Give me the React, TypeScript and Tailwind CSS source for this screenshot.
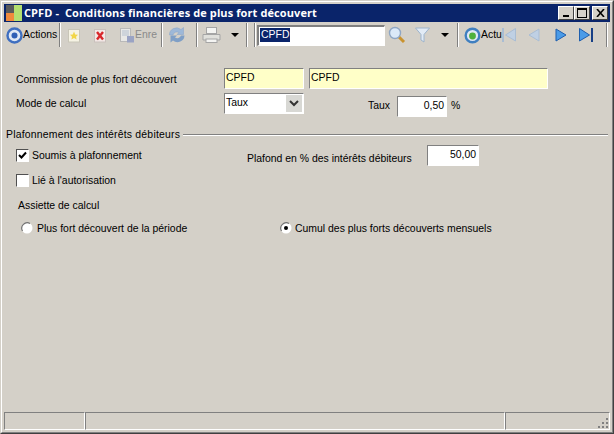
const FONT = 'font-["Liberation_Sans",sans-serif]';

// ─── small win2k controls ────────────────────────────────────────────────────

function Sep({ className = '' }: { className?: string }) {
  return <div className={`h-[24px] w-[2px] shrink-0 border-l border-r border-l-[#808080] border-r-white ${className}`} />;
}

function Caret({ className = '' }: { className?: string }) {
  return <div className={`h-0 w-0 shrink-0 border-x-[4px] border-t-[4px] border-x-transparent border-t-black ${className}`} />;
}

function Sunken({ className = '', children }: { className?: string; children?: React.ReactNode }) {
  return (
    <div className={`shrink-0 border-t border-l border-t-[#808080] border-l-[#808080] border-r border-b border-r-white border-b-white text-[10.45px] leading-[16px] text-black ${className}`}>
      {children}
    </div>
  );
}

function Check({ checked, className = '' }: { checked?: boolean; className?: string }) {
  return (
    <div className={`flex h-[13px] w-[13px] shrink-0 items-center justify-center border-t border-l border-t-[#505050] border-l-[#505050] border-r border-b border-r-white border-b-white bg-white ${className}`}>
      {checked && (
        <svg width="9" height="9" viewBox="0 0 9 9">
          <path d="M1 4 L3.5 6.5 L8 1.5" fill="none" stroke="#000" strokeWidth="2" />
        </svg>
      )}
    </div>
  );
}

function Radio({ checked, className = '' }: { checked?: boolean; className?: string }) {
  return (
    <svg width="12" height="12" viewBox="0 0 12 12" className={`shrink-0 ${className}`}>
      <circle cx="6" cy="6" r="5.5" fill="#fff" />
      <path d="M1.5 9 A5.5 5.5 0 0 1 9 1.5" fill="none" stroke="#707070" strokeWidth="1.2" />
      {checked && <circle cx="6" cy="6" r="2" fill="#000" />}
    </svg>
  );
}

function NavArrow({ dir, bar, on, className = '' }: { dir: 'l' | 'r'; bar?: boolean; on?: boolean; className?: string }) {
  const fill = on ? '#4a9be8' : '#bfd0e4';
  const line = on ? '#1f5fae' : '#a9bdd4';
  return (
    <svg width="16" height="16" viewBox="0 0 16 16" className={`shrink-0 ${className}`}>
      {dir === 'l' ? (
        <path d={bar ? 'M14.5 1.5 V14 L4.5 8 Z' : 'M13 2 V14 L3 8 Z'} fill={fill} stroke={line} />
      ) : (
        <path d={bar ? 'M1.5 1.5 V14 L11.5 8 Z' : 'M3 2 V14 L13 8 Z'} fill={fill} stroke={line} />
      )}
      {bar && <rect x={dir === 'l' ? 1 : 13} y="1" width="2" height="14" fill={on ? '#173f86' : '#a9bdd4'} />}
    </svg>
  );
}

function TitleButton({ children, className = '' }: { children: React.ReactNode; className?: string }) {
  return (
    <div className={`flex h-[14px] w-[16px] items-center justify-center border-t border-l border-t-white border-l-white border-r border-b border-r-[#404040] border-b-[#404040] bg-[#d4d0c8] ${className}`}>
      {children}
    </div>
  );
}

// ─── component ───────────────────────────────────────────────────────────────

export default function App() {
  return (
    <div className="h-[434px] w-[614px] overflow-hidden border border-t-[#d4d0c8] border-l-[#d4d0c8] border-r-[#404040] border-b-[#404040]">
      <div className="h-full border border-t-white border-l-white border-r-[#808080] border-b-[#808080]">
        <div className={`flex h-full flex-col border-[2px] border-[#d4d0c8] bg-[#d4d0c8] text-black ${FONT}`}>
          {/* Title bar */}
          <div className="flex h-[18px] shrink-0 items-center bg-[#0a246a] pl-[2px]">
            <div className="grid h-[16px] w-[16px] shrink-0 grid-cols-2 grid-rows-2">
              <div className="bg-[#5a5a5a]" />
              <div className="row-span-2 bg-[#b4e070]" />
              <div className="bg-[#f08a3c]" />
            </div>
            <span className={`ml-[2px] flex-1 whitespace-pre font-["Open_Sans",sans-serif] text-[11px] font-bold leading-[18px] tracking-[0.1px] text-white`}>CPFD -  Conditions financières de plus fort découvert</span>
            <TitleButton>
              <div className="mt-[6px] h-[2px] w-[6px] bg-black" />
            </TitleButton>
            <TitleButton>
              <div className="h-[10px] w-[10px] border border-t-2 border-black" />
            </TitleButton>
            <TitleButton className="ml-[2px] mr-[2px]">
              <svg width="9" height="8" viewBox="0 0 9 8">
                <path d="M1 0 L8 8 M8 0 L1 8" stroke="#000" strokeWidth="1.6" />
              </svg>
            </TitleButton>
          </div>

          {/* Toolbar */}
          <div className="flex h-[26px] shrink-0 items-center text-[10.45px]">
            <svg width="17" height="17" viewBox="0 0 17 17" className="ml-[2px] shrink-0">
              <circle cx="8.5" cy="8.5" r="7" fill="#dfe8f4" stroke="#3f6fc0" strokeWidth="2.4" />
              <circle cx="8.5" cy="8.5" r="3" fill="#2f5fb5" />
            </svg>
            <div className="w-[33px] shrink-0 whitespace-nowrap leading-[14px]">Actions</div>
            <Sep className="ml-[3px]" />
            <svg width="14" height="15" viewBox="0 0 14 15" className="ml-[6px] shrink-0">
              <rect x="1.5" y="1.5" width="11" height="12.5" fill="#f6f3e4" stroke="#c9c6b8" />
              <path d="M7 3.5 L8.2 6.5 L11 6.8 L9 8.8 L9.6 11.5 L7 10.1 L4.4 11.5 L5 8.8 L3 6.8 L5.8 6.5 Z" fill="#f2d648" />
            </svg>
            <svg width="14" height="15" viewBox="0 0 14 15" className="ml-[12px] shrink-0">
              <rect x="1.5" y="1.5" width="11" height="12.5" fill="#f3e8e6" stroke="#c9c0bc" />
              <path d="M4 4 L10 11.5 M10 4 L4 11.5" stroke="#d8262a" strokeWidth="2.4" />
            </svg>
            <svg width="15" height="16" viewBox="0 0 15 16" className="ml-[13px] shrink-0">
              <rect x="0.5" y="1.5" width="10" height="13" fill="#e8e8e6" stroke="#b9b9b9" />
              <path d="M2 4 H9 M2 6 H9 M2 8 H9" stroke="#b4c0d0" />
              <rect x="7" y="9" width="7" height="6.5" fill="#9aa3c4" />
            </svg>
            <div className="w-[22px] shrink-0 whitespace-nowrap leading-[14px] text-[#8a8a8a]">Enre</div>
            <Sep className="ml-[4px]" />
            <svg width="18" height="18" viewBox="0 0 18 18" className="ml-[5px] shrink-0">
              <path d="M1.5 9 A7 7 0 0 1 13 3.5 L15.5 1.5 V8.5 H9 L11 6.5 A4 4 0 0 0 5 9 Z" fill="#9db8d8" stroke="#86a3c8" strokeWidth="0.5" />
              <path d="M16.5 9.5 A7 7 0 0 1 5 14.5 L2.5 16.5 V9.5 H9 L7 11.5 A4 4 0 0 0 13 9.5 Z" fill="#7f9fc6" />
            </svg>
            <Sep className="ml-[10px]" />
            <svg width="19" height="18" viewBox="0 0 19 18" className="ml-[4px] shrink-0">
              <rect x="4.5" y="1.5" width="10" height="6" fill="#f4f4f2" stroke="#a5a5a5" />
              <path d="M1 8.5 H18 V14 H1 Z" fill="#e0e0dc" stroke="#a5a5a5" />
              <rect x="4" y="13" width="11" height="3.5" fill="#f4f4f2" stroke="#a5a5a5" />
            </svg>
            <Caret className="ml-[10px]" />
            <Sep className="ml-[7px]" />
            <Sep className="ml-[6px]" />
            <Sunken className="ml-[1px] h-[21px] w-[128px] border-t-2 border-l-2 border-t-[#555] border-l-[#555] bg-white pl-[1px] pt-[1px]">
              <span className="block w-fit bg-[#0a246a] px-[1px] leading-[14px] text-white">CPFD</span>
            </Sunken>
            <svg width="18" height="18" viewBox="0 0 18 18" className="ml-[3px] shrink-0">
              <path d="M10 10 L16 16" stroke="#c9932f" strokeWidth="3" />
              <circle cx="7" cy="7" r="5.5" fill="#dbe9f8" stroke="#8ea6c4" strokeWidth="1.4" />
            </svg>
            <svg width="15" height="16" viewBox="0 0 15 16" className="ml-[9px] shrink-0">
              <path d="M0.5 1 H14.5 L9 7.5 V15 L6 13 V7.5 Z" fill="#e2ebf5" stroke="#9db4cd" />
            </svg>
            <Caret className="ml-[11px]" />
            <Sep className="ml-[8px]" />
            <svg width="17" height="17" viewBox="0 0 17 17" className="ml-[5px] shrink-0">
              <circle cx="8.5" cy="8.5" r="6.8" fill="#dfe8f4" stroke="#3f7fc0" strokeWidth="2.4" />
              <circle cx="8.5" cy="9" r="3.4" fill="#4fb13c" />
            </svg>
            <div className="w-[20px] shrink-0 whitespace-nowrap leading-[14px]">Actu</div>
            <NavArrow dir="l" bar />
            <NavArrow dir="l" className="ml-[9px]" />
            <NavArrow dir="r" on className="ml-[11px]" />
            <NavArrow dir="r" bar on className="ml-[9px]" />
            <Sep className="ml-[12px]" />
          </div>

          {/* Form */}
          <div className="flex flex-1 flex-col pl-[2px] pr-[2px] text-[10.45px] leading-[16px]">
            <div className="mt-[20px] flex items-center">
              <span className="ml-[10px] mt-[2px] w-[208px] shrink-0">Commission de plus fort découvert</span>
              <Sunken className="h-[21px] w-[80px] bg-[#ffffc8] pl-[1px] pt-[1px]">CPFD</Sunken>
              <Sunken className="ml-[5px] h-[21px] w-[239px] bg-[#ffffc8] pl-[1px] pt-[1px]">CPFD</Sunken>
            </div>
            <div className="mt-[4px] flex items-start">
              <span className="ml-[10px] mt-[3px] w-[208px] shrink-0">Mode de calcul</span>
              <Sunken className="flex h-[21px] w-[80px] bg-white pl-[1px] pt-[1px]">
                <span className="flex-1">Taux</span>
                <div className="mr-[1px] flex h-[17px] w-[16px] items-center justify-center bg-[#d8d8d4]">
                  <svg width="10" height="7" viewBox="0 0 10 7">
                    <path d="M1 1 L5 5 L9 1" fill="none" stroke="#333" strokeWidth="2" />
                  </svg>
                </div>
              </Sunken>
              <span className="ml-[64px] mt-[5px] w-[29px] shrink-0">Taux</span>
              <Sunken className="mt-[3px] h-[21px] w-[50px] bg-white pr-[2px] pt-[1px] text-right">0,50</Sunken>
              <span className="ml-[4px] mt-[5px]">%</span>
            </div>

            <div className="mt-[10px] flex items-center">
              <span className="whitespace-nowrap tracking-[0.2px]">Plafonnement des intérêts débiteurs</span>
              <div className="ml-[3px] h-[2px] flex-1 border-t border-b border-t-[#808080] border-b-white" />
            </div>

            <div className="mt-[2px] flex items-start">
              <Check checked className="ml-[10px] mt-[4px]" />
              <span className="ml-[3px] mt-[3px] w-[215px] shrink-0">Soumis à plafonnement</span>
              <span className="mt-[6px] w-[180px] shrink-0 whitespace-nowrap">Plafond en % des intérêts débiteurs</span>
              <Sunken className="h-[21px] w-[52px] bg-white pr-[2px] pt-[1px] text-right">50,00</Sunken>
            </div>

            <div className="mt-[6px] flex items-center">
              <Check className="mb-[2px] ml-[10px]" />
              <span className="ml-[3px]">Lié à l'autorisation</span>
            </div>

            <span className="ml-[12px] mt-[9px]">Assiette de calcul</span>

            <div className="mt-[7px] flex items-center">
              <Radio className="mb-[2px] ml-[15px]" />
              <span className="ml-[4px] w-[243px] shrink-0">Plus fort découvert de la période</span>
              <Radio checked className="mb-[2px]" />
              <span className="ml-[3px]">Cumul des plus forts découverts mensuels</span>
            </div>
          </div>

          {/* Status bar */}
          <div className="flex h-[18px] shrink-0">
            <Sunken className="h-full w-[81px]" />
            <Sunken className="h-full w-[420px]" />
            <Sunken className="relative h-full flex-1">
              <svg width="12" height="12" viewBox="0 0 12 12" className="absolute bottom-0 right-0">
                <path d="M9 1 h2 v2 h-2 Z M5 5 h2 v2 h-2 Z M9 5 h2 v2 h-2 Z M1 9 h2 v2 h-2 Z M5 9 h2 v2 h-2 Z M9 9 h2 v2 h-2 Z" fill="#808080" />
              </svg>
            </Sunken>
          </div>
        </div>
      </div>
    </div>
  );
}
